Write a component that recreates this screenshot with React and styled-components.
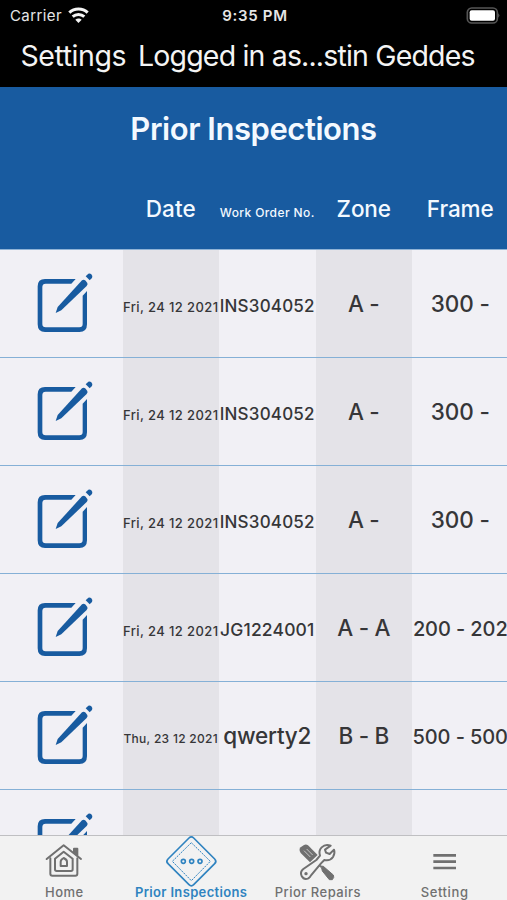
import React from "react";
import styled, { createGlobalStyle } from "styled-components";

const GlobalStyle = createGlobalStyle`
  * {
    box-sizing: border-box;
  }
  body {
    margin: 0;
    background-color: #f1f0f5;
    font-family: Inter, "Liberation Sans", sans-serif;
  }
`;

const Screen = styled.div`
  display: flex;
  flex-direction: column;
  width: 507px;
  height: 900px;
  overflow: hidden;
  background-color: #f1f0f5;
`;

const StatusBar = styled.div`
  display: grid;
  grid-template-columns: 1fr auto 1fr;
  align-items: center;
  flex: none;
  height: 30px;
  padding: 0 7px 0 10px;
  background-color: #000;
  color: #e6e6e6;
  font-size: 15px;
`;
const Carrier = styled.div`
  display: flex;
  align-items: center;
  gap: 6px;
  letter-spacing: 0.4px;
`;
const Clock = styled.span`
  font-weight: 600;
  letter-spacing: 0.7px;
`;
const BatterySlot = styled.div`
  display: flex;
  justify-content: flex-end;
`;

const NavBar = styled.div`
  display: flex;
  flex: none;
  gap: 12px;
  height: 57px;
  padding: 8px 0 0 20.5px;
  background-color: #000;
  color: #f4f4f4;
  font-size: 28.5px;
  line-height: 36px;
  white-space: nowrap;
`;
const NavText = styled.span`
  letter-spacing: ${({ $spacing }) => $spacing}px;
`;

const Header = styled.header`
  flex: none;
  height: 163px;
  background-color: #185ba0;
  border-bottom: 1px solid #8fb3d6;
  color: #f3f9ff;
`;
const Title = styled.h1`
  margin: 0;
  padding-top: 22px;
  font-size: 31px;
  font-weight: 600;
  line-height: 40px;
  letter-spacing: -0.45px;
  text-align: center;
`;

const Row = styled.div`
  display: grid;
  grid-template-columns: 122.5px repeat(4, 96.5px);
`;
const HeaderRow = styled(Row)`
  height: 30px;
  margin-top: 44px;
`;
const ItemRow = styled(Row)`
  flex: none;
  height: 108.1px;
  border-bottom: 1px solid #85b0d6;
`;
const Cell = styled.div`
  display: flex;
  align-items: center;
  justify-content: center;
  padding-top: ${({ $top }) => $top || 0}px;
  background-color: ${({ $shaded }) => ($shaded ? "#e4e3e8" : "transparent")};
  color: ${({ $color }) => $color || "#363638"};
  font-size: ${({ $size }) => $size || 22}px;
  font-weight: 500;
  letter-spacing: ${({ $spacing }) => $spacing || 0}px;
  white-space: nowrap;
`;
const IconCell = styled.div`
  padding: 15px 0 0 25px;
`;

const List = styled.main`
  display: flex;
  flex-direction: column;
  flex: 1;
  min-height: 0;
  overflow: hidden;
`;

const TabBar = styled.nav`
  display: grid;
  grid-template-columns: repeat(4, 1fr);
  flex: none;
  height: 65px;
  background-color: #f2f2f2;
  border-top: 1px solid #bfbfc2;
`;
const Tab = styled.div`
  display: flex;
  flex-direction: column;
  align-items: center;
  color: ${({ $active }) => ($active ? "#2f83c0" : "#707070")};
`;
const TabLabel = styled.span`
  margin-top: -4px;
  padding-left: 2px;
  font-size: 13px;
  font-weight: ${({ $bold }) => ($bold ? 600 : 500)};
  line-height: 16px;
  letter-spacing: ${({ $spacing }) => $spacing}px;
  white-space: nowrap;
`;

const WifiIcon = () => (
  <svg width="21" height="16" viewBox="0 0 63 48" fill="none" stroke="#f4f4f4" strokeWidth="9">
    <path d="M4 17 C19 2 44 2 59 17" />
    <path d="M14 29 C24 20 39 20 49 29" />
    <path d="M31.500 48 L22 38 C27 33 36 33 41 38 Z" fill="#f4f4f4" stroke="none" />
  </svg>
);

const BatteryIcon = () => (
  <svg width="34" height="17" viewBox="0 0 102 51">
    <rect x="4" y="3" width="90" height="45" rx="13" fill="none" stroke="#555" strokeWidth="5" />
    <rect x="11" y="10" width="76" height="31" rx="6" fill="#fff" />
    <path d="M97 19 Q103 25 97 32 Z" fill="#666" />
  </svg>
);

const EditIcon = () => (
  <svg width="80" height="80" viewBox="0 0 240 240" fill="#185ba0">
    <path d="M152 42 H60 Q38 42 38 64 V178 Q38 201 60 201 H163 Q186 201 186 178 V78 L173 92 V177 Q173 187 163 187 H62 Q52 187 52 177 V66 Q52 56 62 56 H139 Z" />
    <path d="M92 144 L98 126 L171 46 Q176 42 182 47 L187 54 Q189 59 185 63 L109 136 Z" />
    <path d="M182 34 L190 26 Q195 24 199 28 Q204 33 201 39 L194 46 Z" />
  </svg>
);

const HomeIcon = () => (
  <svg width="52" height="52" viewBox="111 168 156 156" fill="none" stroke="currentColor" strokeWidth="6" strokeLinejoin="round" strokeLinecap="round">
    <path d="M140 237 L191 196 L243 237" />
    <path d="M151 235 V281 Q151 287 157 287 H226 Q232 287 232 281 V235" />
    <path d="M222 206 H232 V226 L222 217 Z" fill="currentColor" />
    <path d="M165 236 L191 215 L218 236 V268 Q218 273 213 273 H170 Q165 273 165 268 Z" />
    <path d="M182 258 V245 Q182 239 191 234 Q201 239 201 245 V258 Z" />
  </svg>
);

const DiamondIcon = () => (
  <svg width="52" height="52" viewBox="492 168 156 156" overflow="visible" fill="none" stroke="currentColor">
    <path d="M567 174 Q574 167 581 174 L644 237 Q651 244 644 251 L581 314 Q574 321 567 314 L504 251 Q497 244 504 237 Z" strokeWidth="5" />
    <path d="M574 188 L631 244 L574 302 L517 244 Z" strokeWidth="3" strokeDasharray="6 3" />
    <g strokeWidth="5">
      <circle cx="550" cy="244" r="6" />
      <circle cx="575" cy="244" r="6" />
      <circle cx="600" cy="244" r="6" />
    </g>
  </svg>
);

const ToolsIcon = () => (
  <svg width="52" height="52" viewBox="114 168 156 156" fill="none" stroke="currentColor" strokeWidth="6" strokeLinejoin="round">
    <path d="M140 213 Q138 206 143 202 L153 195 Q159 191 165 196 L194 225 L171 247 L143 219 Z" fill="currentColor" stroke="none" />
    <path d="M153 212 L172 231 M161 207 L179 225" stroke="#f2f2f2" strokeWidth="2" />
    <path d="M190 245 L203 258 L211 259 L241 285 Q245 292 238 299 L229 299 L208 273 L206 264 L194 253 Z" fill="currentColor" strokeWidth="3" />
    <path d="M233 197 Q217 191 206 202 Q196 212 201 227 L190 240 L151 267 Q140 276 146 288 Q153 301 166 295 Q171 292 174 286 L204 250 L214 240 Q231 244 240 231 Q247 220 243 209 L230 222 L219 218 L216 209 Z" fill="#f2f2f2" />
    <circle cx="159" cy="281" r="5" fill="currentColor" stroke="none" />
  </svg>
);

const MenuIcon = () => (
  <svg width="52" height="52" viewBox="494 168 156 156" stroke="currentColor" strokeWidth="8">
    <path d="M540 226 H608 M540 245 H608 M540 264 H608" />
  </svg>
);

const columns = [
  { label: "Date", size: 22.5, spacing: 0.1 },
  { label: "Work Order No.", size: 12, spacing: 0.4, top: 8 },
  { label: "Zone", size: 22.5, spacing: -0.1 },
  { label: "Frame", size: 22.5, spacing: -0.1 },
];

const orderStyles = {
  INS304052: { size: 17, spacing: 0.2, top: 5 },
  JG1224001: { size: 17.5, spacing: 0.15, top: 3 },
  qwerty2: { size: 22.5, spacing: -0.2, top: 0 },
};

const inspections = [
  { date: "Fri, 24 12 2021", order: "INS304052", zone: "A -", frame: "300 -" },
  { date: "Fri, 24 12 2021", order: "INS304052", zone: "A -", frame: "300 -" },
  { date: "Fri, 24 12 2021", order: "INS304052", zone: "A -", frame: "300 -" },
  { date: "Fri, 24 12 2021", order: "JG1224001", zone: "A - A", frame: "200 - 202" },
  { date: "Thu, 23 12 2021", order: "qwerty2", zone: "B - B", frame: "500 - 500" },
  { date: "", order: "", zone: "", frame: "" },
];

const tabs = [
  { label: "Home", Icon: HomeIcon, spacing: 0.5 },
  { label: "Prior Inspections", Icon: DiamondIcon, spacing: 0.35, active: true },
  { label: "Prior Repairs", Icon: ToolsIcon, spacing: 0.5 },
  { label: "Setting", Icon: MenuIcon, spacing: 0.6 },
];

const InspectionRow = ({ inspection }) => {
  const { date, order, zone, frame } = inspection;
  const orderStyle = orderStyles[order] || {};
  const thursday = date.startsWith("Thu");
  const longFrame = frame.length > 5;

  return (
    <ItemRow>
      <IconCell>
        <EditIcon />
      </IconCell>
      <Cell $shaded $top={6} $size={thursday ? 12 : 13} $spacing={thursday ? 0.3 : 0.4}>
        {date}
      </Cell>
      <Cell $top={orderStyle.top} $size={orderStyle.size} $spacing={orderStyle.spacing}>
        {order}
      </Cell>
      <Cell $shaded $size={22.5} $spacing={-0.3}>
        {zone}
      </Cell>
      <Cell $top={longFrame ? 3 : 0} $size={longFrame ? 20 : 22.5} $spacing={-0.1}>
        {frame}
      </Cell>
    </ItemRow>
  );
};

const App = () => (
  <>
    <GlobalStyle />
    <Screen>
      <StatusBar>
        <Carrier>
          Carrier
          <WifiIcon />
        </Carrier>
        <Clock>9:35 PM</Clock>
        <BatterySlot>
          <BatteryIcon />
        </BatterySlot>
      </StatusBar>
      <NavBar>
        <NavText $spacing={-0.45}>Settings</NavText>
        <NavText $spacing={-0.83}>Logged in as...stin Geddes</NavText>
      </NavBar>
      <Header>
        <Title>Prior Inspections</Title>
        <HeaderRow>
          <span />
          {columns.map(({ label, size, spacing, top }) => (
            <Cell key={label} $size={size} $spacing={spacing} $top={top} $color="#f3f9ff">
              {label}
            </Cell>
          ))}
        </HeaderRow>
      </Header>
      <List>
        {inspections.map((inspection, index) => (
          <InspectionRow key={index} inspection={inspection} />
        ))}
      </List>
      <TabBar>
        {tabs.map(({ label, Icon, spacing, active }) => (
          <Tab key={label} $active={active}>
            <Icon />
            <TabLabel $bold={active} $spacing={spacing}>
              {label}
            </TabLabel>
          </Tab>
        ))}
      </TabBar>
    </Screen>
  </>
);

export default App;
